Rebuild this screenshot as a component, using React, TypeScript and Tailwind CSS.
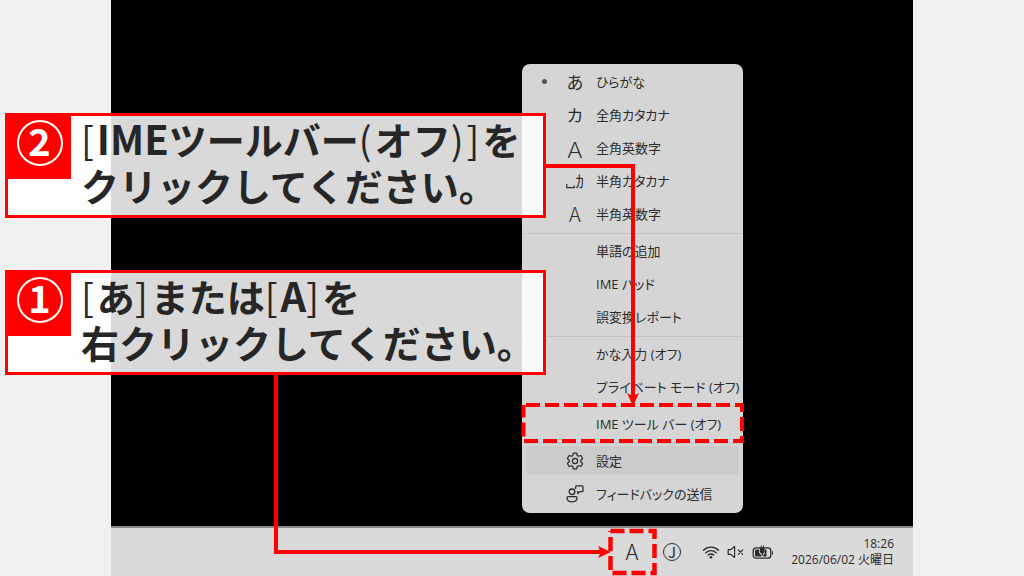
import React from 'react';
import clsx from 'clsx';

interface MenuEntry {
  label: string;
  icon?: React.ReactNode;
  checked?: boolean;
  active?: boolean;
}

const HalfKana = () => (
  <span className="relative flex w-[18px] justify-end text-[17px]">
    ｶ
    <svg className="absolute bottom-0 left-0 h-[5px] w-[9px]" viewBox="0 0 9 5" fill="none" stroke="currentColor" strokeWidth="1.2">
      <path d="M.8 0v3.6h7.4V1.5" />
    </svg>
  </span>
);

const GearIcon = () => (
  <svg className="size-[18px]" viewBox="0 0 18 18" fill="none" stroke="currentColor" strokeWidth="1.2" strokeLinejoin="round">
    <path d="M7.3 1.2h3.4l.5 2.3 1.4.8 2.3-.8 1.7 3-1.8 1.7v1.6l1.8 1.7-1.7 3-2.3-.8-1.4.8-.5 2.3H7.3l-.5-2.3-1.4-.8-2.3.8-1.7-3 1.8-1.7V8.2L1.4 6.5l1.7-3 2.3.8 1.4-.8z" />
    <circle cx="9" cy="9" r="2.6" />
  </svg>
);

const FeedbackIcon = () => (
  <svg className="size-[18px]" viewBox="0 0 18 18" fill="none" stroke="currentColor" strokeWidth="1.3" strokeLinejoin="round">
    <circle cx="6" cy="6.8" r="2.8" />
    <path d="M2.2 11.6h7.6c.8 0 1.3.5 1.3 1.2 0 2.4-2 4-5.1 4s-5.1-1.6-5.1-4c0-.7.5-1.2 1.3-1.2z" />
    <path d="M9.6 4V1.8c0-.5.4-.9.9-.9h5.6c.5 0 .9.4.9.9v3.9c0 .5-.4.9-.9.9h-2.2l-2 2V6.6h-1" />
  </svg>
);

const groups: MenuEntry[][] = [
  [
    { label: 'ひらがな', icon: <span className="text-[17px]">あ</span>, checked: true },
    { label: '全角カタカナ', icon: <span className="text-[17px]">カ</span> },
    { label: '全角英数字', icon: <span className="text-[22px] font-light">Ａ</span> },
    { label: '半角カタカナ', icon: <HalfKana /> },
    { label: '半角英数字', icon: <span className="text-[20px] font-light">A</span> },
  ],
  [{ label: '単語の追加' }, { label: 'IME パッド' }, { label: '誤変換レポート' }],
  [{ label: 'かな入力 (オフ)' }, { label: 'プライベート モード (オフ)' }],
  [{ label: 'IME ツール バー (オフ)' }],
  [
    { label: '設定', icon: <GearIcon />, active: true },
    { label: 'フィードバックの送信', icon: <FeedbackIcon /> },
  ],
];

const ImeMenu: React.FC = () => (
  <nav className="absolute right-[170px] bottom-[63px] w-[221px] rounded-lg bg-[#d5d5d5] py-0.5 text-[#2b2b2b]">
    {groups.map((group, i) => (
      <ul key={i} className={clsx(i > 0 && 'mt-0.5 border-t border-[#c3c3c3] pt-px')}>
        {group.map(item => (
          <li key={item.label} className="h-[33px] px-1 pt-px pb-[3px]">
            <button className={clsx('flex h-full w-full items-center rounded', item.active && 'bg-[#cbcbcb]')}>
              <span className="flex w-9 shrink-0 justify-center">
                {item.checked && <span className="size-[5px] rounded-full bg-[#555]" />}
              </span>
              <span className="flex w-[26px] shrink-0 items-center justify-center font-['Noto_Sans_CJK_JP',sans-serif] leading-none">
                {item.icon}
              </span>
              <span className="ml-2 text-[13px] leading-5 whitespace-nowrap [font-feature-settings:'palt']">{item.label}</span>
            </button>
          </li>
        ))}
      </ul>
    ))}
  </nav>
);

const Taskbar: React.FC = () => (
  <footer className="flex h-[50px] items-center justify-end border-t-2 border-[#8a8a8a] bg-[#dadada] pr-[19px] text-[#2b2b2b]">
    <button className="mr-4 w-3" aria-label="隠れているインジケーター">
      <svg className="h-2 w-3" viewBox="0 0 12 8" fill="none" stroke="currentColor" strokeWidth="1.4">
        <path d="M2.5 5.5 6 2l3.5 3.5" />
      </svg>
    </button>
    <button className="mr-[21px] w-5 pb-1 text-center font-['Noto_Sans_CJK_JP',sans-serif] text-[22px] leading-none font-light">A</button>
    <button className="mr-[21px] flex size-[18px] items-center justify-center rounded-full border border-current pb-0.5 font-['Noto_Sans_CJK_JP',sans-serif] text-[15px] leading-none">
      J
    </button>
    <button className="mr-4 flex w-[72px] items-center justify-between" aria-label="ネットワーク、音量、バッテリー">
      <svg className="h-[14px] w-[18px]" viewBox="0 0 18 14" fill="none" stroke="currentColor" strokeWidth="1.4" strokeLinecap="round">
        <path d="M1.5 5.2a10.6 10.6 0 0 1 15 0M3.9 7.7a7.2 7.2 0 0 1 10.2 0M6.3 10.1a3.8 3.8 0 0 1 5.4 0" />
        <circle cx="9" cy="12.2" r="1.3" fill="currentColor" stroke="none" />
      </svg>
      <svg className="h-[14px] w-[18px]" viewBox="0 0 18 14" fill="none" stroke="currentColor" strokeWidth="1.2" strokeLinejoin="round">
        <path d="M1.2 4.6h2.6L7.6 1.5v11L3.8 9.4H1.2zM11 4.6l5 5M16 4.6l-5 5" />
      </svg>
      <svg className="h-[16px] w-[22px]" viewBox="0 0 22 16">
        <rect x="1.2" y="3.8" width="17.6" height="10.4" rx="3" fill="none" stroke="currentColor" strokeWidth="1.3" />
        <path d="M20 6.8c1.3.4 1.3 4 0 4.4z" fill="currentColor" />
        <path d="M4.5 5.5H7v2c0 2 1.2 3.1 2.4 3.4v1.6H4.5c-1 0-1.5-.6-1.5-1.5V7c0-.9.5-1.5 1.5-1.5zM13 7.5v-2h1.5v7h-3.3v-1.6c1.2-.4 1.8-1.7 1.8-3.4z" fill="currentColor" />
        <path d="M7.8 4h.9V1.5h1V4h1.2V1.5h1V4h.8v3.3c0 1.2-.8 2-1.8 2.3v2H9.7v-2c-1.1-.3-1.9-1.1-1.9-2.3z" fill="currentColor" />
      </svg>
    </button>
    <time className="w-[104px] text-right text-[12px] leading-4 whitespace-nowrap">
      18:26
      <br />
      2026/06/02 火曜日
    </time>
  </footer>
);

const Bracket: React.FC<{ children: React.ReactNode }> = ({ children }) => <span className="pr-[3px] font-normal">{children}</span>;

const Latin: React.FC<{ children: React.ReactNode }> = ({ children }) => <span className="text-[40px]">{children}</span>;

const Callout: React.FC<{ step: number; children: React.ReactNode }> = ({ step, children }) => (
  <section className="flex h-[105px] items-start border-[3px] border-[#ff0000] bg-white/85">
    <div className="flex h-[63px] w-[63px] shrink-0 items-start justify-center bg-[#ff0000] pt-1">
      <span className="flex size-[46px] items-center justify-center rounded-full border-2 border-white pb-1.5 text-[38px] leading-none font-bold text-white">
        {step}
      </span>
    </div>
    <p className="-mt-px ml-[10px] text-[38px] leading-[46px] font-bold whitespace-nowrap text-[#262626]">{children}</p>
  </section>
);

const Connectors: React.FC = () => (
  <svg className="pointer-events-none absolute top-0 left-0 h-[576px] w-[1024px]" viewBox="0 0 1024 576" fill="none" stroke="#ff0000" strokeWidth="4">
    <path d="M545 166H633V398" />
    <path d="M633 406l-6-13 6 3 6-3z" fill="#ff0000" stroke="none" />
    <path d="M276 374V552H602" />
    <path d="M611 552l-13-6 3 6-3 6z" fill="#ff0000" stroke="none" />
    <path d="M526 405H742V441H523.5V405" strokeDasharray="14 5" />
    <path d="M610.5 531H654.5V573H610.5V531" strokeWidth="4.5" strokeDasharray="14 5" />
  </svg>
);

export default function App() {
  return (
    <div className="relative flex min-h-screen flex-col overflow-hidden bg-[#f1f1f1] px-[111px] font-['Open_Sans','Noto_Sans_CJK_JP',sans-serif]">
      <main className="relative flex flex-1 flex-col bg-black">
        <div className="flex-1" />
        <Taskbar />
        <ImeMenu />
      </main>
      <div className="absolute top-[113px] left-[5px] flex w-[541px] flex-col gap-[52px] font-['Noto_Sans_CJK_JP',sans-serif]">
        <Callout step={2}>
          <Bracket>[</Bracket>
          <Latin>IME</Latin>ツールバー<Bracket>(</Bracket>オフ<Bracket>)</Bracket>
          <Bracket>]</Bracket>を
          <br />
          クリックしてください。
        </Callout>
        <Callout step={1}>
          <Bracket>[</Bracket>あ<Bracket>]</Bracket>または<Bracket>[</Bracket>
          <Latin>A</Latin>
          <Bracket>]</Bracket>を
          <br />
          右クリックしてください。
        </Callout>
      </div>
      <Connectors />
    </div>
  );
}
